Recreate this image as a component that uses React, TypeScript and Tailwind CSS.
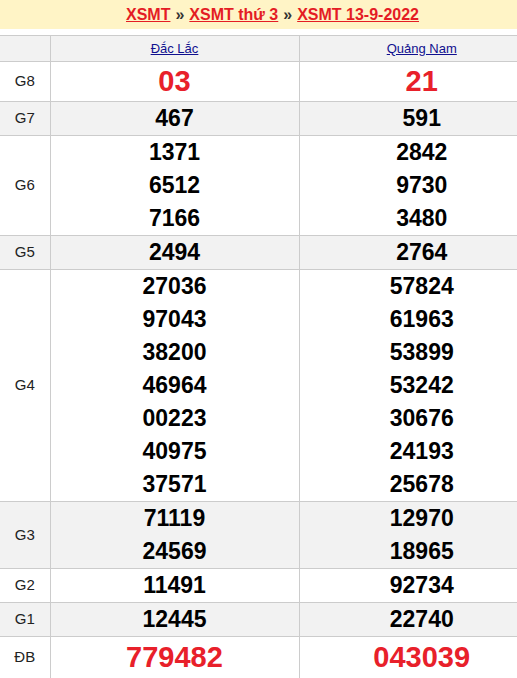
const rows: { label: string; a: string[]; b: string[]; big?: boolean; h?: string }[] = [
  { label: 'G8', a: ['03'], b: ['21'], big: true, h: 'h-[40px]' },
  { label: 'G7', a: ['467'], b: ['591'] },
  { label: 'G6', a: ['1371', '6512', '7166'], b: ['2842', '9730', '3480'] },
  { label: 'G5', a: ['2494'], b: ['2764'] },
  {
    label: 'G4',
    a: ['27036', '97043', '38200', '46964', '00223', '40975', '37571'],
    b: ['57824', '61963', '53899', '53242', '30676', '24193', '25678'],
  },
  { label: 'G3', a: ['71119', '24569'], b: ['12970', '18965'] },
  { label: 'G2', a: ['11491'], b: ['92734'] },
  { label: 'G1', a: ['12445'], b: ['22740'] },
  { label: 'ĐB', a: ['779482'], b: ['043039'], big: true, h: 'h-[42px]' },
];

const Cell = ({ nums, big, h }: { nums: string[]; big?: boolean; h?: string }) => (
  <td className={`border border-[#cccccc] text-center p-0 ${h || ''}`}>
    {nums.map((n, i) =>
      big ? (
        <div key={i} className="text-[29px] leading-[39px] font-bold text-[#e8202a]">
          {n}
        </div>
      ) : (
        <div key={i} className="text-[23px] leading-[33px] font-bold text-black">
          {n}
        </div>
      )
    )}
  </td>
);

export default function App() {
  return (
    <div className="w-[517px] h-[678px] overflow-hidden bg-white" style={{ fontFamily: '"Liberation Sans", Arial, sans-serif' }}>
      <div className="w-[545px]">
        <div className="h-[29px] bg-[#fff4c6] flex items-center justify-center text-[16px] font-bold">
          <a href="#" className="text-[#e41c24] underline">XSMT</a>
          <span className="mx-[5px] text-[#333]">»</span>
          <a href="#" className="text-[#e41c24] underline">XSMT thứ 3</a>
          <span className="mx-[5px] text-[#333]">»</span>
          <a href="#" className="text-[#e41c24] underline">XSMT 13-9-2022</a>
        </div>
        <table className="mt-[6px] w-[545px] border-collapse table-fixed">
          <colgroup>
            <col className="w-[50px]" />
            <col className="w-[249px]" />
            <col />
          </colgroup>
          <tbody>
            <tr className="bg-[#f2f2f2] h-[26px]">
              <td className="border border-[#cccccc] border-l-0"></td>
              <td className="border border-[#cccccc] text-center text-[13px]">
                <a href="#" className="text-[#10108f] underline">Đắc Lắc</a>
              </td>
              <td className="border border-[#cccccc] text-center text-[13px]">
                <a href="#" className="text-[#10108f] underline">Quảng Nam</a>
              </td>
            </tr>
            {rows.map((r, i) => (
              <tr key={r.label} className={i % 2 === 1 ? 'bg-[#f2f2f2]' : 'bg-white'}>
                <td className="border border-[#cccccc] border-l-0 text-center text-[15px] text-[#222]">{r.label}</td>
                <Cell nums={r.a} big={r.big} h={r.h} />
                <Cell nums={r.b} big={r.big} h={r.h} />
              </tr>
            ))}
          </tbody>
        </table>
      </div>
    </div>
  );
}
